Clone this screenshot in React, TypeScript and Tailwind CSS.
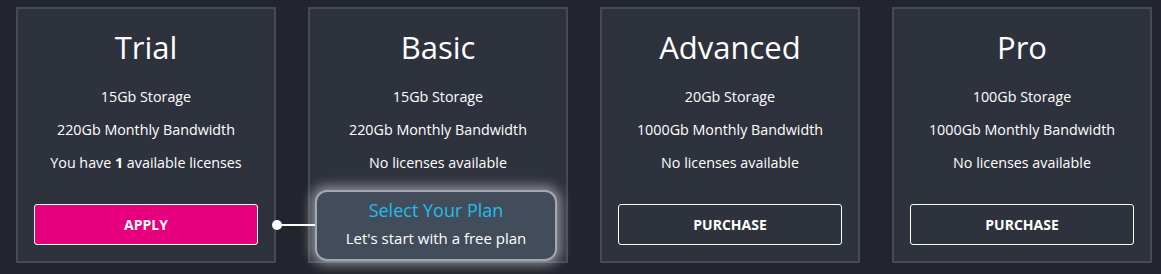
import React from "react";

type Plan = {
  name: string;
  storage: string;
  bandwidth: string;
  licenses: number;
  action: string;
};

const plans: Plan[] = [
  { name: "Trial", storage: "15Gb Storage", bandwidth: "220Gb Monthly Bandwidth", licenses: 1, action: "APPLY" },
  { name: "Basic", storage: "15Gb Storage", bandwidth: "220Gb Monthly Bandwidth", licenses: 0, action: "" },
  { name: "Advanced", storage: "20Gb Storage", bandwidth: "1000Gb Monthly Bandwidth", licenses: 0, action: "PURCHASE" },
  { name: "Pro", storage: "100Gb Storage", bandwidth: "1000Gb Monthly Bandwidth", licenses: 0, action: "PURCHASE" },
];

const PlanCard = ({ plan }: { plan: Plan }) => {
  return (
    <div className="w-[260px] h-[256px] shrink-0 border-2 border-[#434b58] bg-[#2e323d] flex flex-col items-center pt-[18px] px-4">
      <h2 className="text-[31px] leading-[40px] font-normal text-white">{plan.name}</h2>
      <div className="mt-[13px] flex flex-col items-center text-[14.3px] leading-[33px] text-white">
        <p>{plan.storage}</p>
        <p>{plan.bandwidth}</p>
        {plan.licenses > 0 ? (
          <p>
            You have <span className="font-bold">{plan.licenses}</span> available licenses
          </p>
        ) : (
          <p>No licenses available</p>
        )}
      </div>
      {plan.action === "APPLY" && (
        <button className="mt-[25px] w-full h-[41px] rounded-[3px] border border-white bg-[#e6007e] text-white text-[14px] font-bold">
          APPLY
        </button>
      )}
      {plan.action === "PURCHASE" && (
        <button className="mt-[25px] w-full h-[41px] rounded-[3px] border border-white bg-transparent text-white text-[14px] font-bold">
          PURCHASE
        </button>
      )}
    </div>
  );
};

export default function App() {
  return (
    <div
      className="relative w-full h-[274px] bg-[#22252d] overflow-hidden"
      style={{ fontFamily: '"Open Sans", "Noto Sans", sans-serif' }}
    >
      <div className="flex flex-row gap-8 pl-4 pt-[7px]">
        {plans.map((plan) => (
          <PlanCard key={plan.name} plan={plan} />
        ))}
      </div>

      {/* onboarding tooltip */}
      <div className="absolute left-[272px] top-[220px] w-[10px] h-[10px] rounded-full bg-white" />
      <div className="absolute left-[277px] top-[224px] w-[40px] h-[2px] bg-white" />
      <div className="absolute left-[315px] top-[190px] w-[242px] h-[71px] rounded-[12px] border-2 border-[#a3a8b0] bg-[#434c5a] shadow-[0_0_12px_4px_rgba(255,255,255,0.45)] flex flex-col items-center pt-[6px]">
        <p className="text-[18px] leading-[25px] text-[#1ebeef]">Select Your Plan</p>
        <p className="mt-[5px] text-[15px] leading-[21px] text-white">Let's start with a free plan</p>
      </div>
    </div>
  );
}
